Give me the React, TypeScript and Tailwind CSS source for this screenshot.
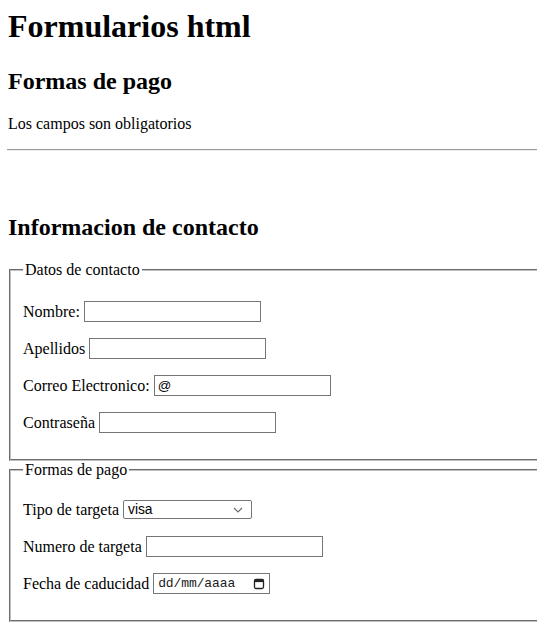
import React from "react";

const serif = "font-['Liberation_Serif','Times_New_Roman',serif]";
const sans = "font-['Liberation_Sans',Arial,sans-serif]";

function TextBox({ value, width = "w-[177px]" }: { value?: string; width?: string }) {
  return (
    <input
      readOnly
      value={value ?? ""}
      className={`${width} h-[21px] border border-[#767676] bg-white px-[3px] text-[13.33px] text-black outline-none ${sans}`}
    />
  );
}

function Row({ label, children }: { label: string; children: React.ReactNode }) {
  return (
    <div className="mt-4 flex h-[21px] items-center">
      <span className="mr-[4px] leading-[18px]">{label}</span>
      {children}
    </div>
  );
}

function Fieldset({
  legend,
  children,
  pad,
}: {
  legend: string;
  children: React.ReactNode;
  pad: string;
}) {
  return (
    <fieldset className={`ml-[1px] mr-[2px] border-2 border-[#c0c0c0] [border-style:groove] px-3 ${pad}`}>
      <legend className="px-[2px] leading-[18.4px]">{legend}</legend>
      {children}
    </fieldset>
  );
}

export default function App() {
  return (
    <div className={`h-[631px] w-full overflow-hidden bg-white text-black text-[16px] ${serif}`}>
      <div className="w-[1200px] pl-2 pt-2">
        <h1 className="text-[32px] font-bold leading-[37px]">Formularios html</h1>
        <h2 className="mt-[22px] text-[24px] font-bold leading-[28px]">Formas de pago</h2>
        <p className="mt-[20px] leading-[18px]">Los campos son obligatorios</p>
        <div className="-ml-[1px] mt-4 h-[2px] border-t border-b border-t-[#9a9a9a] border-b-[#eeeeee]" />
        <h2 className="mt-[62px] text-[24px] font-bold leading-[28px]">Informacion de contacto</h2>
        <div className="mt-[20px]">
          <Fieldset legend="Datos de contacto" pad="pt-[5.6px] pb-[26px]">
            <Row label="Nombre:">
              <TextBox />
            </Row>
            <Row label="Apellidos">
              <TextBox />
            </Row>
            <Row label="Correo Electronico:">
              <TextBox value="@" />
            </Row>
            <Row label="Contraseña">
              <TextBox />
            </Row>
          </Fieldset>
          <Fieldset legend="Formas de pago" pad="pt-[3.6px] pb-[26px]">
            <Row label="Tipo de targeta">
              <div className={`flex h-[19px] w-[129px] items-center justify-between rounded-[2px] border border-[#767676] bg-white pl-[4px] pr-[8px] pt-[1px] text-[13.8px] leading-none ${sans}`}>
                <span>visa</span>
                <svg width="10" height="6" viewBox="0 0 10 6" fill="none">
                  <path d="M1 1l4 4 4-4" stroke="#6b6b6b" strokeWidth="1.2" />
                </svg>
              </div>
            </Row>
            <Row label="Numero de targeta">
              <TextBox />
            </Row>
            <Row label="Fecha de caducidad">
              <div className="flex h-[21px] w-[117px] items-center justify-between border border-[#767676] bg-white pl-[4px] pr-[4px]">
                <span className="font-['Liberation_Mono','DejaVu_Sans_Mono',monospace] text-[13px] tracking-[-0.1px] text-[#1a1a1a]">
                  dd/mm/aaaa
                </span>
                <svg width="12" height="12" viewBox="0 0 12 12" fill="none">
                  <rect x="1.5" y="1.5" width="9" height="9" rx="1.5" stroke="#222" strokeWidth="1.3" />
                  <rect x="1.5" y="1.5" width="9" height="2.6" fill="#222" />
                </svg>
              </div>
            </Row>
          </Fieldset>
        </div>
      </div>
    </div>
  );
}
